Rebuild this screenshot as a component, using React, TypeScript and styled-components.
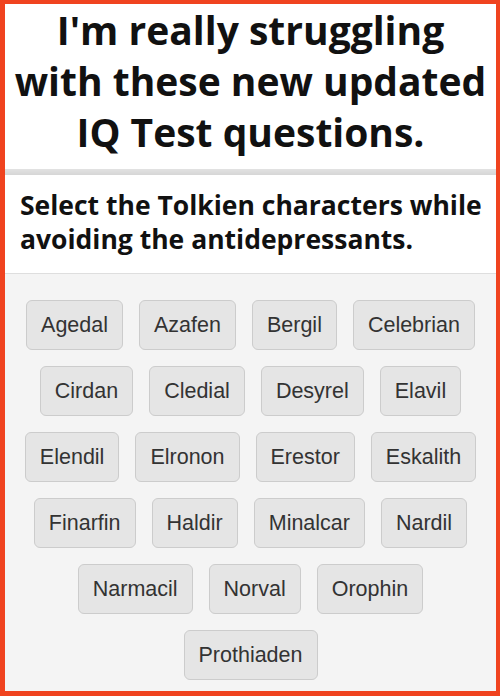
import styled, { createGlobalStyle } from "styled-components";

const GlobalStyle = createGlobalStyle`
  html, body {
    margin: 0;
    padding: 0;
    background: #ffffff;
  }
  * {
    box-sizing: border-box;
  }
`;

const Frame = styled.div`
  width: 500px;
  height: 696px;
  border: 5px solid #f0431f;
  border-right-width: 4px;
  border-top-width: 4px;
  display: flex;
  flex-direction: column;
  background-color: #ffffff;
  overflow: hidden;
`;

const Header = styled.h1`
  margin: 0;
  padding: 0;
  height: 165px;
  font-family: "Open Sans", "Noto Sans", sans-serif;
  font-weight: 700;
  font-size: 39px;
  line-height: 51px;
  text-align: center;
  color: #111111;
  white-space: nowrap;
`;

const Band = styled.div`
  height: 6px;
  background: linear-gradient(#e2e2e2, #d6d6d6);
`;

const Prompt = styled.p`
  margin: 0;
  padding: 13px 4px 0 15px;
  height: 99px;
  border-bottom: 1px solid #dedede;
  font-family: "Open Sans", "Noto Sans", sans-serif;
  font-weight: 700;
  font-size: 26.5px;
  line-height: 34px;
  color: #111111;
`;

const Options = styled.div`
  flex: 1;
  background-color: #f4f4f4;
  padding: 26px 16px 0;
  display: flex;
  flex-wrap: wrap;
  justify-content: center;
  align-content: flex-start;
  gap: 16px 16px;
`;

const Choice = styled.button`
  height: 50px;
  padding: 0 14px;
  border: 1px solid #cccccc;
  border-radius: 6px;
  background-color: #e5e5e5;
  color: #333333;
  font-family: "Liberation Sans", Arial, sans-serif;
  font-size: 21.5px;
  line-height: 48px;
  cursor: pointer;
`;

const names = [
  "Agedal",
  "Azafen",
  "Bergil",
  "Celebrian",
  "Cirdan",
  "Cledial",
  "Desyrel",
  "Elavil",
  "Elendil",
  "Elronon",
  "Erestor",
  "Eskalith",
  "Finarfin",
  "Haldir",
  "Minalcar",
  "Nardil",
  "Narmacil",
  "Norval",
  "Orophin",
  "Prothiaden",
];

function App() {
  return (
    <>
      <GlobalStyle />
      <Frame>
        <Header>
          I'm really struggling
          <br />
          with these new updated
          <br />
          IQ Test questions.
        </Header>
        <Band />
        <Prompt>
          Select the Tolkien characters while avoiding the antidepressants.
        </Prompt>
        <Options>
          {names.map((name) => (
            <Choice key={name}>{name}</Choice>
          ))}
        </Options>
      </Frame>
    </>
  );
}

export default App;
